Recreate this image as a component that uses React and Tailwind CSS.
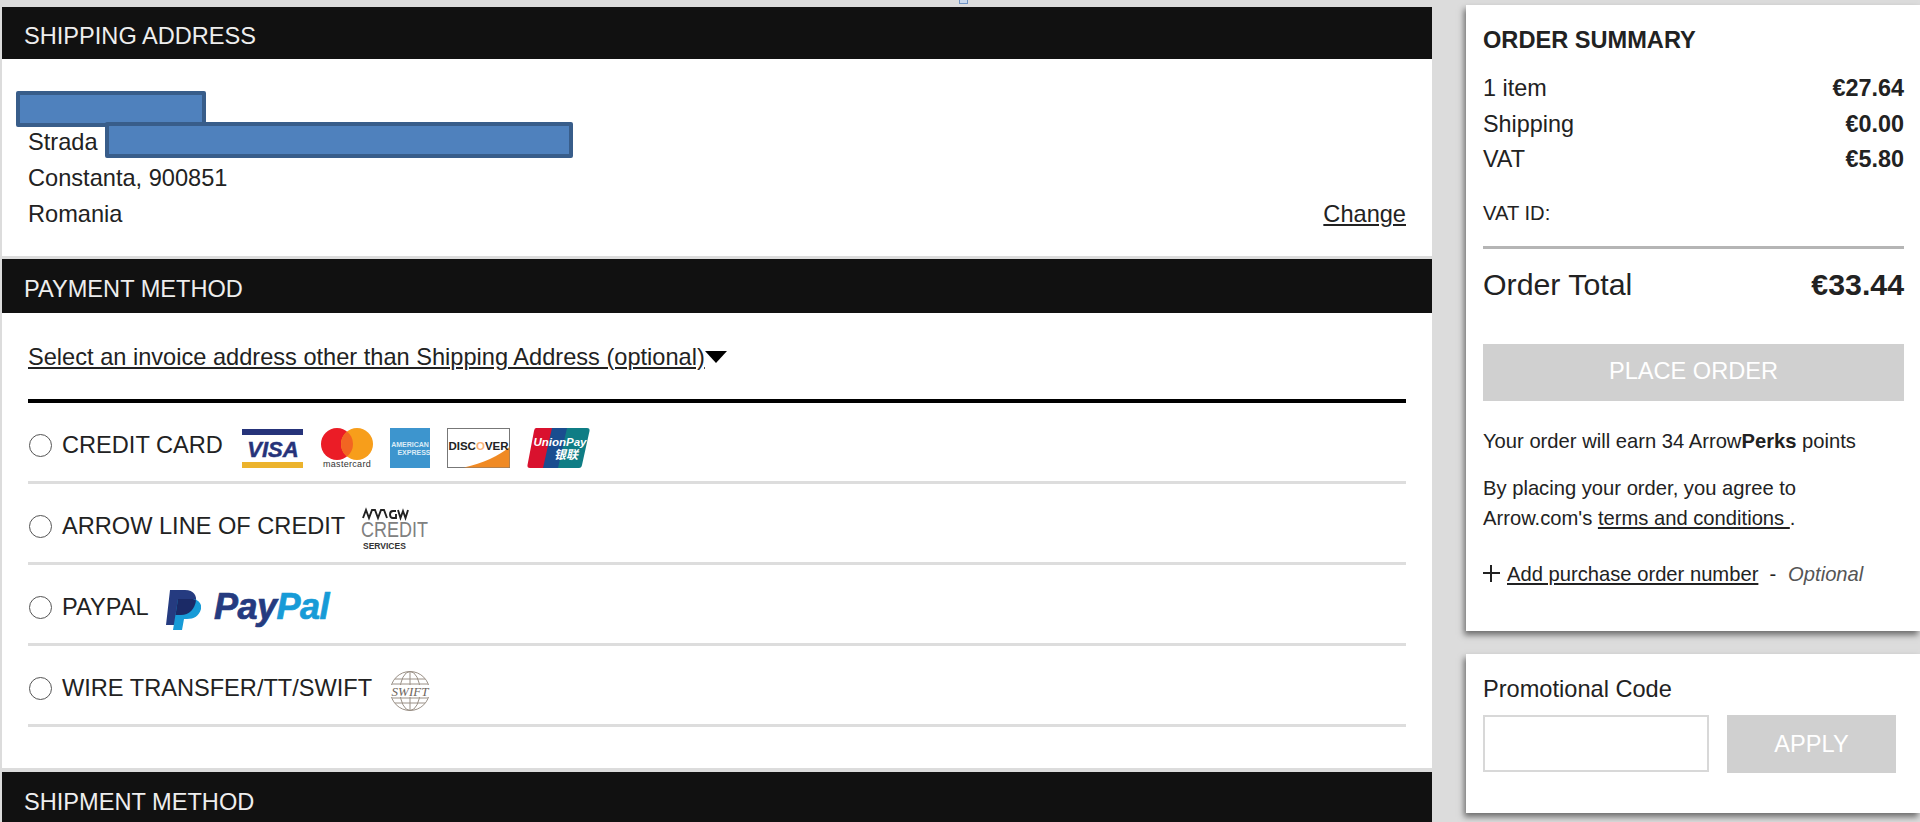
import React from 'react';

const Visa = () => (
  <svg width="61" height="39" viewBox="0 0 61 39" className="shrink-0 mr-[1px]">
    <rect x="0" y="0" width="61" height="6" fill="#26337a" />
    <rect x="0" y="33" width="61" height="6" fill="#ecb32c" />
    <text x="31" y="28" textAnchor="middle" fontFamily="Liberation Sans" fontWeight="700" fontStyle="italic" fontSize="22" fill="#26337a" stroke="#26337a" strokeWidth="0.5">VISA</text>
  </svg>
);

const Mastercard = () => (
  <svg width="52" height="41" viewBox="0 0 52 41" className="shrink-0">
    <circle cx="16" cy="16" r="16" fill="#eb1c26" />
    <circle cx="36" cy="16" r="16" fill="#f79e1b" />
    <path d="M26 3.500a16 16 0 0 1 0 25a16 16 0 0 1 0-25z" fill="#f26522" />
    <text x="26" y="39" textAnchor="middle" fontFamily="Liberation Sans" fontSize="9" letterSpacing="0.300" fill="#333333">mastercard</text>
  </svg>
);

const Amex = () => (
  <svg width="40" height="40" viewBox="0 0 40 40" className="shrink-0">
    <rect width="40" height="40" fill="#3d95ce" />
    <text x="20" y="19" textAnchor="middle" fontFamily="Liberation Sans" fontWeight="700" fontSize="7" fill="#dcecf7">AMERICAN</text>
    <text x="24" y="27" textAnchor="middle" fontFamily="Liberation Sans" fontWeight="700" fontSize="7" fill="#dcecf7">EXPRESS</text>
  </svg>
);

const Discover = () => (
  <svg width="63" height="40" viewBox="0 0 63 40" className="shrink-0">
    <rect x="0.500" y="0.500" width="62" height="39" fill="#fff" stroke="#777777" />
    <path d="M17 39.500C36 35 52 28 62.500 19V39.500z" fill="#f08a24" />
    <text x="31.500" y="21.500" textAnchor="middle" fontFamily="Liberation Sans" fontWeight="700" fontSize="11.500" fill="#222222">
      DISC<tspan fill="#f9b27a">O</tspan>VER
    </text>
  </svg>
);

const UnionPay = () => (
  <svg width="63" height="40" viewBox="0 0 63 40" className="shrink-0">
    <path d="M9 0h17l-9 40H3q-3 0-2.500-3L7 3q.5-3 2-3z" fill="#d9112e" />
    <path d="M25 0h18l-9 40H16z" fill="#1a4d8f" />
    <path d="M40 0h20q3 0 2.500 3L55 37q-.5 3-3 3H31z" fill="#0f7d85" />
    <text x="33" y="18" textAnchor="middle" fontFamily="Liberation Sans" fontStyle="italic" fontWeight="700" fontSize="11.500" fill="#fff">UnionPay</text>
    <text x="39" y="31" textAnchor="middle" fontFamily="Noto Sans CJK SC, sans-serif" fontStyle="italic" fontWeight="700" fontSize="12" fill="#fff">银联</text>
  </svg>
);

const ArrowCredit = () => (
  <svg width="68" height="42" viewBox="0 0 68 42" className="shrink-0 overflow-visible">
    <path d="M2 10L5 2L8 10L11 2H14L17 10L20 2H23L26 10M35 3H32Q29 3 29 6.500T32 10H35V6M37 2L39.500 10L42 3L44.500 10L47 2" fill="none" stroke="#222222" strokeWidth="1.900" />
    <text x="0" y="29" fontFamily="Liberation Sans" fontSize="22" fill="#808080" textLength="67" lengthAdjust="spacingAndGlyphs">CREDIT</text>
    <text x="2" y="41" fontFamily="Liberation Sans" fontWeight="700" fontSize="8.500" fill="#333333">SERVICES</text>
  </svg>
);

const PayPalMark = () => (
  <svg width="35" height="40" viewBox="0 0 35 40" className="shrink-0">
    <path d="M4 0H19C28 0 31 6 30 12C28 21 22 25 15 25H11L9 35H0z" fill="#253b80" />
    <path d="M12 9H27C33 10 36 14 35 19C33 26 28 29 21 29H18L16 40H7z" fill="#179bd7" />
    <path d="M12 9H27Q29 9.500 30 10.500C29 19 23 25 15 25H9.500z" fill="#1b2a66" />
  </svg>
);

const PayPalWord = () => (
  <svg width="118" height="34" viewBox="0 0 118 34" className="shrink-0 overflow-visible">
    <text x="0" y="26" fontFamily="Liberation Sans" fontWeight="700" fontStyle="italic" fontSize="36" strokeWidth="0.700" letterSpacing="-0.500">
      <tspan fill="#253b80" stroke="#253b80">Pay</tspan>
      <tspan fill="#179bd7" stroke="#179bd7">Pal</tspan>
    </text>
  </svg>
);

const Swift = () => (
  <svg width="42" height="40" viewBox="0 0 42 40" className="shrink-0">
    <g fill="none" stroke="#9a9086" strokeWidth="1">
      <circle cx="21" cy="20" r="19.500" />
      <ellipse cx="21" cy="20" rx="10" ry="19.500" />
      <path d="M21 .5v39M6 8h30M3 13h36M3 27h36M6 32h30" />
    </g>
    <rect x="1" y="14" width="40" height="12" fill="#fff" />
    <text x="21" y="25" textAnchor="middle" fontFamily="Liberation Serif" fontStyle="italic" fontSize="13" fill="#6f665d">SWIFT</text>
  </svg>
);

const methods = [
  { label: 'CREDIT CARD', gap: 'gap-[19px]', logoGap: 'gap-[17px]', logos: [<Visa key="v" />, <Mastercard key="m" />, <Amex key="a" />, <Discover key="d" />, <UnionPay key="u" />] },
  { label: 'ARROW LINE OF CREDIT', gap: 'gap-4', logoGap: '', logos: [<ArrowCredit key="c" />] },
  { label: 'PAYPAL', gap: 'gap-[17px]', logoGap: 'gap-[13px]', logos: [<PayPalMark key="p" />, <PayPalWord key="w" />] },
  { label: 'WIRE TRANSFER/TT/SWIFT', gap: 'gap-[17px]', logoGap: '', logos: [<Swift key="s" />] },
];

const SectionHeader = ({ title, height }) => (
  <div className={`${height} bg-[#111111] flex items-center px-[22px] pt-[8px] text-[23.6px] text-[#eeeeee]`}>{title}</div>
);

export default function App() {
  return (
    <div className="relative h-[822px] overflow-hidden bg-[#dcdcdc] font-['Liberation_Sans',Arial,sans-serif] text-[#222222]">
      <div className="absolute left-[959px] top-0 w-[9px] h-[4px] bg-[#c9d8ec] border border-[#6f93c4] border-t-0" />
      <div className="flex items-start">
        <div className="w-[1430px] ml-[2px] mr-[34px] pt-[7px] shrink-0">
          <SectionHeader title="SHIPPING ADDRESS" height="h-[52px]" />
          <div className="relative h-[197px] bg-white px-[26px] pt-[65px] text-[23.6px] leading-[36px]">
            <div className="absolute left-[14px] top-[32px] w-[190px] h-[36px] bg-[#4f81bd] border-4 border-[#385d8a] rounded-[2px]" />
            <div>Strada</div>
            <div>Constanta, 900851</div>
            <div className="flex justify-between items-center">
              <span>Romania</span>
              <a className="underline">Change</a>
            </div>
            <div className="absolute left-[103px] top-[63px] w-[468px] h-[36px] bg-[#4f81bd] border-4 border-[#385d8a] rounded-[2px]" />
          </div>
          <div className="mt-[3px]">
            <SectionHeader title="PAYMENT METHOD" height="h-[54px]" />
            <div className="h-[455px] bg-white px-[26px]">
              <div className="h-[90px] pt-[3px] flex items-center text-[23.6px] border-b-4 border-black">
                <span className="underline">Select an invoice address other than Shipping Address (optional)</span>
                <span className="w-0 h-0 border-x-[11px] border-x-transparent border-t-[12px] border-t-black -mt-[2px]" />
              </div>
              {methods.map((m) => (
                <div key={m.label} className="h-[81px] pt-[7px] flex items-center gap-[10px] border-b-[3px] border-[#dddddd] text-[23.6px]">
                  <span className="ml-[1px] w-[23px] h-[23px] rounded-full border border-[#555555] shrink-0" />
                  <div className={`flex items-center ${m.gap}`}>
                    <span className="whitespace-nowrap">{m.label}</span>
                    <div className={`flex items-center mt-[5px] ${m.logoGap}`}>{m.logos}</div>
                  </div>
                </div>
              ))}
            </div>
          </div>
          <div className="mt-[4px]">
            <SectionHeader title="SHIPMENT METHOD" height="h-[53px]" />
          </div>
        </div>
        <div className="flex-1 pt-[5px]">
          <div className="h-[626px] bg-white pl-[17px] pr-[16px] pt-[21px] shadow-[-2px_4px_6px_rgba(0,0,0,0.5)]">
            <h2 className="text-[23.6px] leading-[28px] font-bold">ORDER SUMMARY</h2>
            <div className="mt-[17px] text-[23.4px] leading-[35.5px]">
              <div className="flex justify-between"><span>1 item</span><b>€27.64</b></div>
              <div className="flex justify-between"><span>Shipping</span><b>€0.00</b></div>
              <div className="flex justify-between"><span>VAT</span><b>€5.80</b></div>
            </div>
            <div className="mt-[23px] text-[20.2px] leading-[24px]">VAT ID:</div>
            <div className="mt-[21px] h-[3px] bg-[#b5b5b5]" />
            <div className="mt-[18px] flex justify-between items-center text-[30.3px] leading-[36px]">
              <span>Order Total</span><b>€33.44</b>
            </div>
            <button className="mt-[41px] w-full h-[57px] bg-[#d0d0d0] text-white text-[23.6px]">PLACE ORDER</button>
            <p className="mt-[27px] text-[20.2px] leading-[26px]">Your order will earn 34 Arrow<b>Perks</b> points</p>
            <p className="mt-[19px] text-[20.2px] leading-[30px]">
              By placing your order, you agree to<br />
              Arrow.com's <a className="underline">terms and conditions </a>.
            </p>
            <div className="mt-[28px] flex items-center text-[20.2px] leading-[26px]">
              <span className="relative w-[17px] h-[17px] mr-[7px] shrink-0">
                <span className="absolute left-0 top-[7px] w-[17px] h-[2px] bg-[#222222]" />
                <span className="absolute left-[7px] top-0 w-[2px] h-[17px] bg-[#222222]" />
              </span>
              <a className="underline">Add purchase order number</a>
              <span className="ml-[11px]">-</span>
              <i className="ml-[12px] text-[#555555]">Optional</i>
            </div>
          </div>
          <div className="mt-[23px] h-[159px] bg-white pl-[17px] pt-[22px] shadow-[-2px_4px_6px_rgba(0,0,0,0.5)]">
            <div className="text-[23.6px] leading-[26px]">Promotional Code</div>
            <div className="mt-[13px] flex gap-[18px]">
              <input className="w-[226px] h-[57px] bg-white border-2 border-[#d8d8d8] outline-none" />
              <button className="w-[169px] h-[58px] pt-[2px] bg-[#d0d0d0] text-white text-[23.6px]">APPLY</button>
            </div>
          </div>
        </div>
      </div>
    </div>
  );
}
